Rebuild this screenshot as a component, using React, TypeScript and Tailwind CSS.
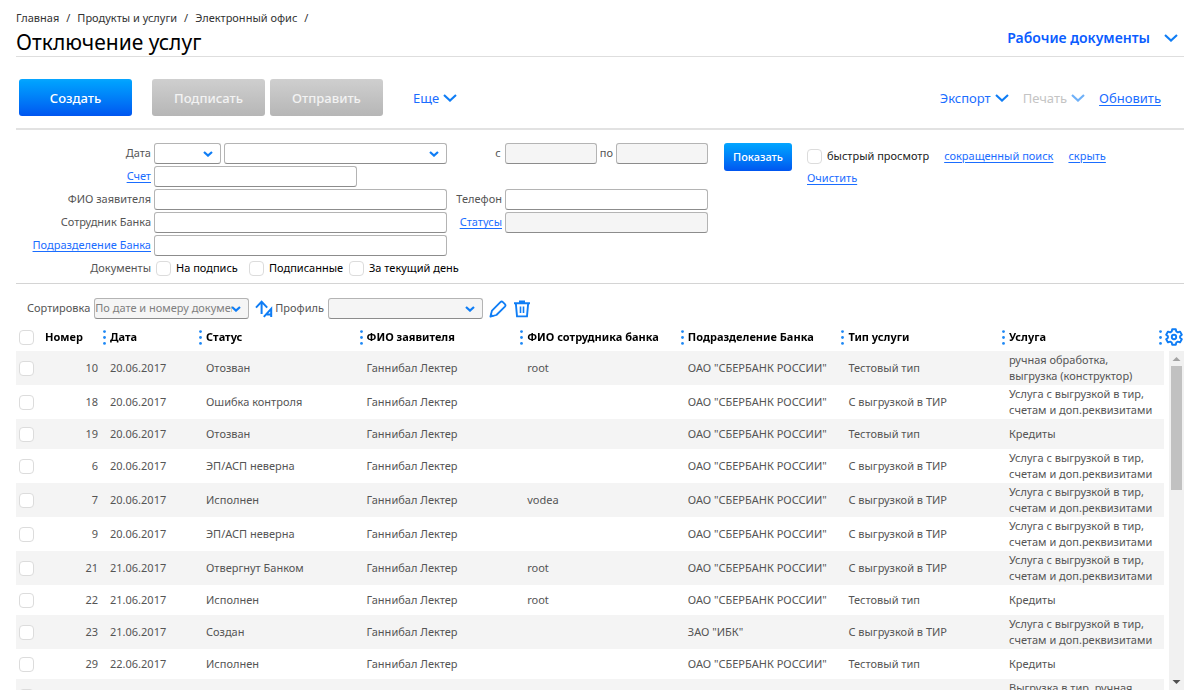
import { useState } from "react";
import clsx from "clsx";

type Doc = {
  id: number;
  date: string;
  status: string;
  employee?: string;
  dept: string;
  type: string;
  service: string;
};

const SBER = 'ОАО "СБЕРБАНК РОССИИ"';
const TIR = "Услуга с выгрузкой в тир, счетам и доп.реквизитами";

const docs: Doc[] = [
  { id: 10, date: "20.06.2017", status: "Отозван", employee: "root", dept: SBER, type: "Тестовый тип", service: "ручная обработка, выгрузка (конструктор)" },
  { id: 18, date: "20.06.2017", status: "Ошибка контроля", dept: SBER, type: "С выгрузкой в ТИР", service: TIR },
  { id: 19, date: "20.06.2017", status: "Отозван", dept: SBER, type: "Тестовый тип", service: "Кредиты" },
  { id: 6, date: "20.06.2017", status: "ЭП/АСП неверна", dept: SBER, type: "С выгрузкой в ТИР", service: TIR },
  { id: 7, date: "20.06.2017", status: "Исполнен", employee: "vodea", dept: SBER, type: "С выгрузкой в ТИР", service: TIR },
  { id: 9, date: "20.06.2017", status: "ЭП/АСП неверна", dept: SBER, type: "С выгрузкой в ТИР", service: TIR },
  { id: 21, date: "21.06.2017", status: "Отвергнут Банком", employee: "root", dept: SBER, type: "С выгрузкой в ТИР", service: TIR },
  { id: 22, date: "21.06.2017", status: "Исполнен", employee: "root", dept: SBER, type: "Тестовый тип", service: "Кредиты" },
  { id: 23, date: "21.06.2017", status: "Создан", dept: 'ЗАО "ИБК"', type: "С выгрузкой в ТИР", service: TIR },
  { id: 29, date: "22.06.2017", status: "Исполнен", dept: SBER, type: "Тестовый тип", service: "Кредиты" },
  { id: 30, date: "22.06.2017", status: "Исполнен", dept: SBER, type: "С выгрузкой в ТИР", service: "Выгрузка в тир, ручная обработка" },
];

const columns = ["Дата", "Статус", "ФИО заявителя", "ФИО сотрудника банка", "Подразделение Банка", "Тип услуги", "Услуга"];

const field = "h-[21px] min-w-0 rounded-[3px] border border-[#b4b4b4] border-b-[#8c8c8c] px-1 outline-none";
const checkbox =
  "size-[15px] shrink-0 appearance-none rounded-[4px] border border-[#dcdcdc] bg-white checked:bg-[#0a84ff]";
const link = "text-[#1a6dff] underline underline-offset-2";

function Chevron({ className }: { className?: string }) {
  return (
    <svg viewBox="0 0 14 8" className={clsx("h-2 w-3.5 shrink-0 text-[#0f7df5]", className)} fill="none" aria-hidden>
      <path d="M1 1l6 5.6L13 1" stroke="currentColor" strokeWidth="2.1" />
    </svg>
  );
}

function Select({ label, options, disabled, className }: { label: string; options: string[]; disabled?: boolean; className?: string }) {
  return (
    <div className={clsx("relative", className)}>
      <select
        aria-label={label}
        className={clsx(field, "block w-full appearance-none pl-0 pr-4", disabled ? "bg-[#f5f5f5] text-[#808080]" : "bg-white")}
      >
        {options.map((o) => (
          <option key={o}>{o}</option>
        ))}
      </select>
      <svg viewBox="0 0 10 6" className="pointer-events-none absolute right-2 top-2 h-1.5 w-2.5" fill="none" aria-hidden>
        <path d="M1 1l4 3.6L9 1" stroke="#0f7df5" strokeWidth="2.2" />
      </svg>
    </div>
  );
}

function Dots() {
  return (
    <svg viewBox="0 0 3 15" className="h-[15px] w-[3px] shrink-0" fill="#1e88f5" aria-hidden>
      <circle cx="1.5" cy="1.6" r="1.4" />
      <circle cx="1.5" cy="7.5" r="1.4" />
      <circle cx="1.5" cy="13.4" r="1.4" />
    </svg>
  );
}

function SortIcon() {
  return (
    <svg viewBox="0 0 18 18" className="size-[18px]" fill="none" stroke="#0f7df5" strokeWidth="2" aria-hidden>
      <path d="M6.6 14V1.8M1 7.6l5.6-6 5.6 6" />
      <path d="M8.8 16.9l7.4-8v8M11.8 14.6h4.4" />
    </svg>
  );
}

function PencilIcon() {
  return (
    <svg viewBox="0 0 18 18" className="size-[18px]" fill="none" stroke="#0f7df5" strokeWidth="1.8" strokeLinejoin="round" aria-hidden>
      <path d="M3 10.6L11.4 2.1a1.8 1.8 0 0 1 2.5 0l2 2a1.8 1.8 0 0 1 0 2.5L7.4 15 1.4 16.6z" />
      <path d="M.9 17.2l.9-4 3.1 3.1z" fill="#0f7df5" stroke="none" />
    </svg>
  );
}

function TrashIcon() {
  return (
    <svg viewBox="0 0 18 18" className="size-[18px]" fill="none" stroke="#0f7df5" strokeWidth="1.9" aria-hidden>
      <path d="M1 3.2h16M6 1.5h6" />
      <path d="M2.9 4L4 16.4h10L15.1 4" />
      <path d="M7.5 6.5V13M10.5 6.5V13" strokeWidth="1.6" />
    </svg>
  );
}

function GearIcon() {
  return (
    <svg viewBox="0 0 18 18" className="size-[18px]" fill="none" stroke="#0f7df5" strokeWidth="1.9" strokeLinejoin="round" aria-hidden>
      <path d="M7.2 1.2h3.6l.5 2.3 1.5.9 2.2-.8 1.8 3.1-1.7 1.5v1.6l1.7 1.5-1.8 3.1-2.2-.8-1.5.9-.5 2.3H7.2l-.5-2.3-1.5-.9-2.2.8-1.8-3.1 1.7-1.5V8.2L1.2 6.7 3 3.6l2.2.8 1.5-.9z" />
      <circle cx="9" cy="9" r="2.2" />
    </svg>
  );
}

function Header() {
  return (
    <header className="flex items-end justify-between border-b border-[#dedede] pt-2.5">
      <div>
        <nav className="flex gap-[7px] leading-4 text-[#333]">
          {["Главная", "Продукты и услуги", "Электронный офис"].map((item) => (
            <span key={item} className="flex gap-[7px]">
              <a href="#">{item}</a>
              <span>/</span>
            </span>
          ))}
        </nav>
        <h1 className="pt-0.5 text-[21px] leading-7 text-black">Отключение услуг</h1>
      </div>
      <button className="mr-1.5 mb-2 flex items-center gap-3.5 text-sm leading-5 font-semibold text-[#0a5cff]">
        Рабочие документы
        <Chevron />
      </button>
    </header>
  );
}

function Toolbar() {
  const big = "h-[37px] w-[113px] rounded-[3px] font-medium bg-linear-to-b";
  return (
    <div className="flex items-center border-b-2 border-[#e2e2e2] pt-[22px] pb-3 pl-[3px] pr-[23px] text-[13px] leading-5">
      <button className={clsx(big, "from-[#08a6ff] to-[#0055f0] text-white")}>Создать</button>
      <button className={clsx(big, "ml-5 from-[#cfcfcf] to-[#b6b6b6] text-white/80")}>Подписать</button>
      <button className={clsx(big, "ml-[5px] from-[#cfcfcf] to-[#b6b6b6] text-white/80")}>Отправить</button>
      <button className="ml-[30px] flex items-center gap-1 text-[#1a6dff]">
        Еще
        <Chevron />
      </button>
      <div className="ml-auto flex items-center gap-3.5 text-[#1a6dff]">
        <button className="flex items-center gap-1">
          Экспорт
          <Chevron />
        </button>
        <button className="flex items-center gap-1 text-[#c4c4c4]">
          Печать
          <Chevron className="opacity-60" />
        </button>
        <a href="#" className={link}>
          Обновить
        </a>
      </div>
    </div>
  );
}

function Filters() {
  const row = "flex h-[23px] items-center";
  const label = "mr-[3px] w-[135px] shrink-0 text-right";
  return (
    <form className="flex items-start border-b border-[#d4d4d4] pt-3 pb-[3px]">
      <div className="w-[692px] shrink-0">
        <div className={row}>
          <span className={label}>Дата</span>
          <Select label="Дата" options={[""]} className="w-[67px]" />
          <Select label="Период" options={[""]} className="ml-[3px] w-[223px]" />
          <label htmlFor="from" className="ml-auto mr-1">с</label>
          <input id="from" disabled className={clsx(field, "w-[92px] bg-[#f5f5f5]")} />
          <label htmlFor="to" className="mx-[3px]">по</label>
          <input id="to" disabled className={clsx(field, "w-[92px] bg-[#f5f5f5]")} />
        </div>
        <div className={row}>
          <label htmlFor="account" className={label}>
            <a href="#" className={link}>Счет</a>
          </label>
          <input id="account" className={clsx(field, "w-[203px]")} />
        </div>
        <div className={row}>
          <label htmlFor="applicant" className={label}>ФИО заявителя</label>
          <input id="applicant" className={clsx(field, "w-[293px]")} />
          <label htmlFor="phone" className="ml-auto mr-[3px]">Телефон</label>
          <input id="phone" className={clsx(field, "w-[203px]")} />
        </div>
        <div className={row}>
          <label htmlFor="employee" className={label}>Сотрудник Банка</label>
          <input id="employee" className={clsx(field, "w-[293px]")} />
          <label htmlFor="statuses" className="ml-auto mr-[3px]">
            <a href="#" className={link}>Статусы</a>
          </label>
          <input id="statuses" disabled className={clsx(field, "w-[203px] bg-[#f5f5f5]")} />
        </div>
        <div className={row}>
          <label htmlFor="dept" className={label}>
            <a href="#" className={link}>Подразделение Банка</a>
          </label>
          <input id="dept" className={clsx(field, "w-[293px]")} />
        </div>
        <div className={clsx(row, "text-black")}>
          <span className={clsx(label, "text-[#555]")}>Документы</span>
          <label className="ml-0.5 flex w-[93px] items-center gap-[5px]">
            <input type="checkbox" className={checkbox} />
            На подпись
          </label>
          <label className="flex w-[100px] items-center gap-[5px]">
            <input type="checkbox" className={checkbox} />
            Подписанные
          </label>
          <label className="flex items-center gap-[5px]">
            <input type="checkbox" className={checkbox} />
            За текущий день
          </label>
        </div>
      </div>
      <button type="button" className="mt-px ml-4 h-7 w-[68px] shrink-0 rounded-[3px] bg-linear-to-b from-[#08a6ff] to-[#0055f0] font-medium text-white">
        Показать
      </button>
      <div className="ml-[15px] leading-4">
        <div className="flex h-7 items-center gap-[15px]">
          <label className="flex items-center gap-[5px] text-[#222]">
            <input type="checkbox" className={checkbox} />
            быстрый просмотр
          </label>
          <a href="#" className={link}>сокращенный поиск</a>
          <a href="#" className={link}>скрыть</a>
        </div>
        <a href="#" className={link}>Очистить</a>
      </div>
    </form>
  );
}

function SortBar() {
  return (
    <div className="flex items-center pt-3.5 pl-[11px]">
      <span className="mr-1">Сортировка</span>
      <Select label="Сортировка" disabled options={["По дате и номеру документа"]} className="w-[155px]" />
      <button aria-label="Направление сортировки" className="ml-1.5 mr-0.5">
        <SortIcon />
      </button>
      <span className="mr-1">Профиль</span>
      <Select label="Профиль" disabled options={[""]} className="w-[155px]" />
      <button aria-label="Изменить" className="ml-1.5">
        <PencilIcon />
      </button>
      <button aria-label="Удалить" className="ml-1.5">
        <TrashIcon />
      </button>
    </div>
  );
}

function DocsTable() {
  const [selected, setSelected] = useState<number[]>([]);

  const toggle = (id: number) => {
    setSelected((prev) => (prev.includes(id) ? prev.filter((x) => x !== id) : [...prev, id]));
  };

  return (
    <div className="mb-px flex min-h-0 flex-1">
      <div className="min-w-0 flex-1 overflow-y-auto [scrollbar-width:none]">
        <table className="w-full table-fixed leading-4">
          <thead className="sticky top-0 bg-white text-left text-black">
            <tr className="h-8">
              <th className="w-6 pt-1 pl-[3px]">
                <input
                  type="checkbox"
                  aria-label="Выбрать все"
                  className={clsx(checkbox, "block")}
                  checked={selected.length === docs.length}
                  onChange={(e) => setSelected(e.target.checked ? docs.map((d) => d.id) : [])}
                />
              </th>
              <th className="w-[62px] pt-1 pl-[5px]">Номер</th>
              {columns.map((c, i) => (
                <th key={c} className={clsx("pt-1", i === 0 && "w-24", i === columns.length - 1 && "w-[163px]")}>
                  <div className="flex items-center gap-1 whitespace-nowrap pl-px">
                    <Dots />
                    {c}
                    {i === columns.length - 1 && (
                      <span className="ml-auto mr-0.5">
                        <Dots />
                      </span>
                    )}
                  </div>
                </th>
              ))}
            </tr>
          </thead>
          <tbody>
            {docs.map((d) => (
              <tr key={d.id} className="h-[30px] odd:bg-[#f4f4f4]">
                <td className="pl-[3px]">
                  <input
                    type="checkbox"
                    aria-label={`Документ ${d.id}`}
                    className={clsx(checkbox, "block")}
                    checked={selected.includes(d.id)}
                    onChange={() => toggle(d.id)}
                  />
                </td>
                <td className="pr-1 text-right">{d.id}</td>
                <td className="pl-2">{d.date}</td>
                <td className="pl-2">{d.status}</td>
                <td className="pl-2">Ганнибал Лектер</td>
                <td className="pl-2">{d.employee}</td>
                <td className="pl-2 whitespace-nowrap">{d.dept}</td>
                <td className="pl-2">{d.type}</td>
                <td className="px-2 py-px">{d.service}</td>
              </tr>
            ))}
          </tbody>
        </table>
      </div>
      <div className="flex w-5 shrink-0 flex-col">
        <button aria-label="Настройки" className="flex h-8 items-center pt-1 pl-px">
          <GearIcon />
        </button>
        <div className="ml-[5px] flex flex-1 flex-col items-center bg-[#f1f1f1]">
          <svg viewBox="0 0 15 15" className="size-[15px]" aria-hidden>
            <path d="M3.5 10l4-4 4 4z" fill="#a3a3a3" />
          </svg>
          <div className="h-[124px] w-[11px] bg-[#c1c1c1]" />
          <svg viewBox="0 0 15 15" className="mt-auto size-[15px]" aria-hidden>
            <path d="M3.5 5l4 4 4-4z" fill="#505050" />
          </svg>
        </div>
      </div>
    </div>
  );
}

export default function App() {
  return (
    <div className="flex h-screen flex-col overflow-hidden bg-white px-4 font-['Noto_Sans',sans-serif] text-[11px] text-[#555]">
      <Header />
      <Toolbar />
      <Filters />
      <SortBar />
      <DocsTable />
    </div>
  );
}
